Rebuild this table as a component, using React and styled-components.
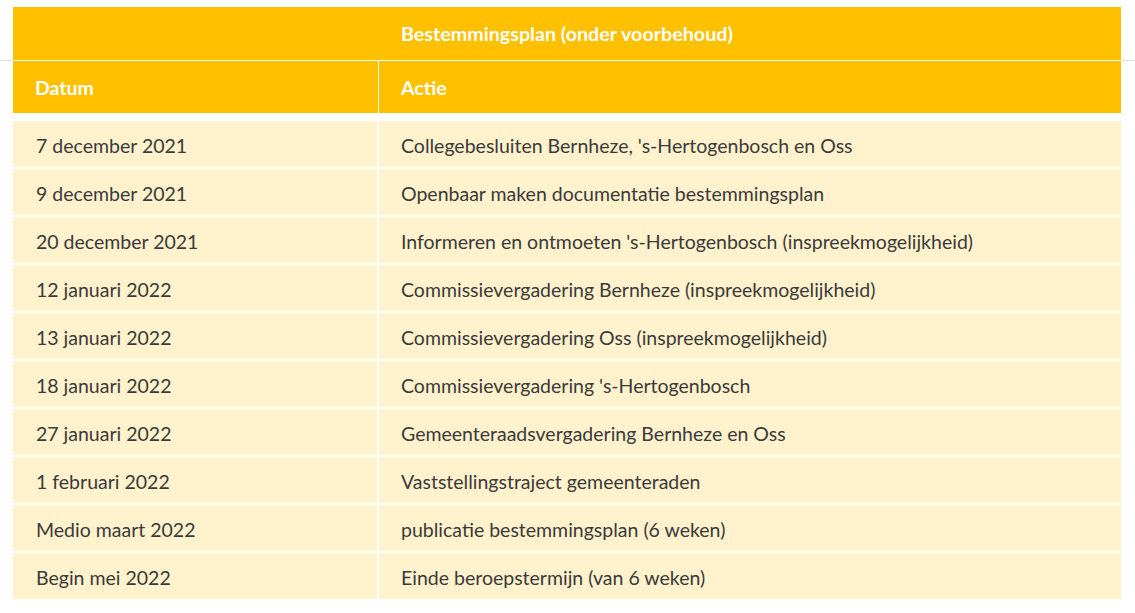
import React from "react";
import styled, { createGlobalStyle } from "styled-components";

const Global = createGlobalStyle`
  html, body { margin: 0; padding: 0; background: #fff; }
  body { font-family: Lato, "Open Sans", "Liberation Sans", sans-serif; }
`;

const Page = styled.div`
  width: 1135px;
  min-height: 613px;
  box-sizing: border-box;
  padding: 7px 14px 0 13px;
  background: linear-gradient(
    to bottom,
    transparent 60px,
    #e2e2e2 60px,
    #e2e2e2 61px,
    transparent 61px
  );
`;

const Table = styled.div`
  width: 1108px;
  display: flex;
  flex-direction: column;
`;

const TitleRow = styled.div`
  height: 53px;
  background: #ffc000;
  color: #fff;
  font-weight: 700;
  font-size: 19.7px;
  display: flex;
  align-items: center;
  padding-left: 388px;
  border-bottom: 1px solid #fff;
`;

const HeadRow = styled.div`
  display: grid;
  grid-template-columns: 365px 1fr;
  column-gap: 1px;
  background: #fff;
  margin-bottom: 8px;
`;

const HeadCell = styled.div`
  height: 52px;
  background: #ffc000;
  color: #fff;
  font-weight: 700;
  font-size: 19.5px;
  display: flex;
  align-items: center;
  padding-left: 22px;
  padding-top: 1px;
  box-sizing: border-box;
`;

const Body = styled.div`
  display: flex;
  flex-direction: column;
  gap: 2px;
`;

const Row = styled.div`
  display: grid;
  grid-template-columns: 364px 1fr;
  column-gap: 2px;
`;

const Cell = styled.div`
  height: 46px;
  background: #fff2cc;
  color: #3a3a3a;
  font-size: 19.5px;
  display: flex;
  align-items: center;
  padding-left: ${(p) => (p.$second ? 22 : 23)}px;
  padding-top: 2px;
  box-sizing: border-box;
`;

const rows = [
  ["7 december 2021", "Collegebesluiten Bernheze, 's-Hertogenbosch en Oss"],
  ["9 december 2021", "Openbaar maken documentatie bestemmingsplan"],
  ["20 december 2021", "Informeren en ontmoeten 's-Hertogenbosch (inspreekmogelijkheid)"],
  ["12 januari 2022", "Commissievergadering Bernheze (inspreekmogelijkheid)"],
  ["13 januari 2022", "Commissievergadering Oss (inspreekmogelijkheid)"],
  ["18 januari 2022", "Commissievergadering 's-Hertogenbosch"],
  ["27 januari 2022", "Gemeenteraadsvergadering Bernheze en Oss"],
  ["1 februari 2022", "Vaststellingstraject gemeenteraden"],
  ["Medio maart 2022", "publicatie bestemmingsplan (6 weken)"],
  ["Begin mei 2022", "Einde beroepstermijn (van 6 weken)"],
];

export default function App() {
  return (
    <>
      <Global />
      <Page>
        <Table>
          <TitleRow>Bestemmingsplan (onder voorbehoud)</TitleRow>
          <HeadRow>
            <HeadCell>Datum</HeadCell>
            <HeadCell>Actie</HeadCell>
          </HeadRow>
          <Body>
            {rows.map(([d, a]) => (
              <Row key={d}>
                <Cell>{d}</Cell>
                <Cell $second>{a}</Cell>
              </Row>
            ))}
          </Body>
        </Table>
      </Page>
    </>
  );
}
